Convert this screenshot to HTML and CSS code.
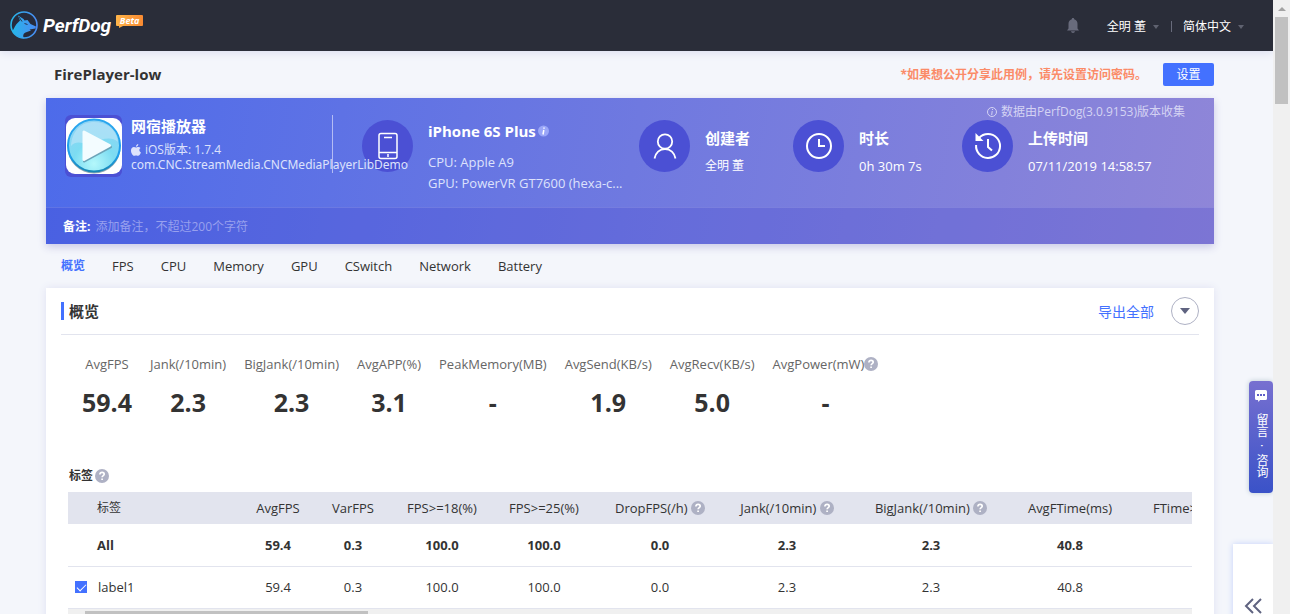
FILE: index.html
```
<!DOCTYPE html>
<html lang="zh-CN">
<head>
<meta charset="utf-8">
<title>PerfDog - FirePlayer-low</title>
<link rel="stylesheet" href="styles.css">
</head>
<body>
<svg class="defs" aria-hidden="true">
  <defs>
    <linearGradient id="logo-blue" x1="0" y1="0" x2="1" y2="0">
      <stop offset="0" stop-color="#27b5e8"/><stop offset="1" stop-color="#4a8cf5"/>
    </linearGradient>
    <radialGradient id="play-blue" cx="0.5" cy="0.85" r="0.8">
      <stop offset="0" stop-color="#b4f8fb"/><stop offset="0.5" stop-color="#7cdcf2"/><stop offset="1" stop-color="#8ed4f4"/>
    </radialGradient>
    <linearGradient id="ring-blue" x1="0" y1="0" x2="0" y2="1">
      <stop offset="0" stop-color="#2aa6ee"/><stop offset="0.7" stop-color="#1d9eea"/><stop offset="1" stop-color="#1787b4"/>
    </linearGradient>
    <symbol id="help" viewBox="0 0 14 14">
      <circle cx="7" cy="7" r="7" fill="#aeb1c4"/>
      <path d="M4.9 5.5C4.9 4 5.8 3.3 7.1 3.3S9.2 4 9.2 5.2C9.2 6.6 7.1 6.6 7.1 8.3M7.1 9.5v1.6" fill="none" stroke="#fff" stroke-width="1.7"/>
    </symbol>
  </defs>
</svg>
<div class="app">
  <header class="topbar">
    <a class="brand" href="#">
      <svg class="brand-mark" viewBox="0 0 28 28">
        <circle cx="14" cy="14" r="13" fill="#262b3c" stroke="url(#logo-blue)" stroke-width="1.600"/>
        <path d="M2.500 20C4.500 17 5 14 8.500 11L10 9.500 8 4.500 13.500 8 14.500 9.500 17.500 9 20.500 13 26 15.500 25.500 17.500 19.500 18.500 21 19.500 15.500 21.500C13 22.500 12.500 25 14 27.500 8 26.500 4.500 23 2.500 20Z" fill="url(#logo-blue)"/>
        <path d="M9 6l3 4.500M14.500 12.500l3 1" stroke="#2b3550" fill="none"/>
      </svg>
      <span class="brand-name">PerfDog</span>
      <span class="beta">Beta</span>
    </a>
    <nav class="user-nav">
      <button class="bell" aria-label="通知">
        <svg viewBox="0 0 12 15"><path d="M6 0c.8 0 1.200.5 1.200 1.200C9.500 1.800 10.500 3.500 10.500 6v4.500L12 12.500H0L1.500 10.500V6C1.500 3.500 2.500 1.800 4.800 1.200 4.800.5 5.200 0 6 0ZM4 13.300h4C7.800 14.500 7 15 6 15s-1.800-.5-2-1.700Z" fill="#686b7c"/></svg>
      </button>
      <button class="menu">全明 董<i class="caret"></i></button>
      <span class="nav-sep"></span>
      <button class="menu">简体中文<i class="caret"></i></button>
    </nav>
  </header>

  <main class="page">
    <div class="title-row">
      <h1>FirePlayer-low</h1>
      <p class="warning">*如果想公开分享此用例，请先设置访问密码。</p>
      <button class="primary">设置</button>
    </div>

    <section class="hero">
      <p class="collected">
        <svg viewBox="0 0 10 10"><circle cx="5" cy="5" r="4.500" fill="none" stroke="currentColor"/><path d="M5.500 2v1M5.200 4L4.700 8" stroke="currentColor" fill="none"/></svg>
        <span>数据由PerfDog(3.0.9153)版本收集</span>
      </p>
      <div class="facts">
        <div class="app-info">
          <div class="app-icon">
            <svg viewBox="0 0 56 56">
              <rect width="56" height="56" rx="9" fill="#fff"/>
              <circle cx="28" cy="29" r="26.500" fill="#8ba6b4"/>
              <circle cx="28" cy="27.500" r="26" fill="url(#play-blue)" stroke="url(#ring-blue)" stroke-width="2"/>
              <path d="M5 28C12 20 20 29 28 25S45 18 52 24C50 10 40 4 28 4S6 12 5 28Z" fill="#bfe6f8" opacity=".6"/>
              <path d="M18 14.500v29L45 29Z" fill="#6ca4b8" stroke="#6ca4b8" stroke-width="2" stroke-linejoin="round"/>
              <path d="M18 14v27.500L43.500 27.500Z" fill="#f3fcff" stroke="#f3fcff" stroke-width="3" stroke-linejoin="round"/>
            </svg>
          </div>
          <div class="app-text">
            <h2>网宿播放器</h2>
            <p class="os"><svg viewBox="0 0 10 12"><path d="M7.300 0C7.300 1.500 6.300 2.700 4.900 2.800 4.900 1.300 6 .2 7.300 0ZM5 3.400C5.700 3.400 6.300 2.900 7.300 2.900 8.200 2.900 9 3.300 9.500 4 7.700 5.100 8 7.600 9.900 8.400 9.300 10 8.300 11.800 7.100 11.800 6.300 11.800 6 11.400 5.100 11.400S3.900 11.800 3.100 11.800C1.700 11.800 0 9.100 0 6.500 0 4.200 1.400 3 2.900 3 3.800 3 4.400 3.400 5 3.400Z" fill="currentColor"/></svg><span>iOS版本: 1.7.4</span></p>
            <p class="bundle">com.CNC.StreamMedia.CNCMediaPlayerLibDemo</p>
          </div>
        </div>
        <div class="fact device">
          <span class="disc"><svg viewBox="0 0 28 28"><g fill="none" stroke="#fff" stroke-width="1.500"><rect x="5" y="1.500" width="18" height="25" rx="2"/><path d="M5 20.500h18M10 5.500h8M14 22v3"/></g></svg></span>
          <div>
            <h2>iPhone 6S Plus<svg class="info" viewBox="0 0 11 12"><rect y=".5" width="11" height="11" rx="5.500" fill="#9aa6f8"/><path d="M6 2.500v1.300M5.800 5L5 9.500" stroke="#fff" stroke-width="1.500"/></svg></h2>
            <p>CPU: Apple A9</p>
            <p>GPU: PowerVR GT7600 (hexa-c...</p>
          </div>
        </div>
        <div class="fact">
          <span class="disc"><svg viewBox="0 0 28 28"><g fill="none" stroke="#fff" stroke-width="1.800"><circle cx="14" cy="9.500" r="7.200"/><path d="M3.500 26.500C4.500 21 8.500 17 14 17S23.500 21 24.500 26.500"/></g></svg></span>
          <div><h2>创建者</h2><p>全明 董</p></div>
        </div>
        <div class="fact">
          <span class="disc"><svg viewBox="0 0 28 28"><g fill="none" stroke="#fff" stroke-width="2"><circle cx="14" cy="14" r="12"/><path d="M14 7v7h6"/></g></svg></span>
          <div><h2>时长</h2><p class="latin">0h 30m 7s</p></div>
        </div>
        <div class="fact">
          <span class="disc"><svg viewBox="0 0 28 28"><g fill="none" stroke="#fff" stroke-width="2"><path d="M2.100 13A12 12 0 1 0 14 2Q8.500 2 5 6"/><path d="M14 7v8l4 3.500"/></g><path d="M1.500 1v8h8Z" fill="#fff"/></svg></span>
          <div><h2>上传时间</h2><p class="latin">07/11/2019 14:58:57</p></div>
        </div>
      </div>
      <div class="note">
        <label for="note">备注:</label>
        <input id="note" type="text" placeholder="添加备注，不超过200个字符">
      </div>
    </section>

    <nav class="tabs">
      <a class="active" href="#">概览</a><a href="#">FPS</a><a href="#">CPU</a><a href="#">Memory</a><a href="#">GPU</a><a href="#">CSwitch</a><a href="#">Network</a><a href="#">Battery</a>
    </nav>

    <section class="panel">
      <div class="panel-head">
        <h2>概览</h2>
        <a class="export" href="#">导出全部</a>
        <button class="round" aria-label="收起"><i></i></button>
      </div>
      <dl class="stats">
        <div><dt>AvgFPS</dt><dd>59.4</dd></div>
        <div><dt>Jank(/10min)</dt><dd>2.3</dd></div>
        <div><dt>BigJank(/10min)</dt><dd>2.3</dd></div>
        <div><dt>AvgAPP(%)</dt><dd>3.1</dd></div>
        <div><dt>PeakMemory(MB)</dt><dd>-</dd></div>
        <div><dt>AvgSend(KB/s)</dt><dd>1.9</dd></div>
        <div><dt>AvgRecv(KB/s)</dt><dd>5.0</dd></div>
        <div><dt>AvgPower(mW)<svg class="help"><use href="#help"/></svg></dt><dd>-</dd></div>
      </dl>
      <h3>标签<svg class="help"><use href="#help"/></svg></h3>
      <div class="table-wrap">
        <table>
          <colgroup><col class="c-label"><col class="c-avg"><col class="c-var"><col class="c-18"><col class="c-25"><col class="c-drop"><col class="c-jank"><col class="c-big"><col class="c-time"><col class="c-last"></colgroup>
          <thead>
            <tr><th class="cjk">标签</th><th>AvgFPS</th><th>VarFPS</th><th>FPS&gt;=18(%)</th><th>FPS&gt;=25(%)</th><th>DropFPS(/h) <svg class="help"><use href="#help"/></svg></th><th>Jank(/10min) <svg class="help"><use href="#help"/></svg></th><th>BigJank(/10min) <svg class="help"><use href="#help"/></svg></th><th>AvgFTime(ms)</th><th>FTime&gt;=</th></tr>
          </thead>
          <tbody>
            <tr class="total"><td>All</td><td>59.4</td><td>0.3</td><td>100.0</td><td>100.0</td><td>0.0</td><td>2.3</td><td>2.3</td><td>40.8</td><td></td></tr>
            <tr><td class="pick"><label><input type="checkbox" checked>label1</label></td><td>59.4</td><td>0.3</td><td>100.0</td><td>100.0</td><td>0.0</td><td>2.3</td><td>2.3</td><td>40.8</td><td></td></tr>
          </tbody>
        </table>
        <div class="hscroll"><span></span></div>
      </div>
    </section>
  </main>

  <a class="feedback" href="#">
    <svg viewBox="0 0 12 12"><path d="M1.500 0h9Q12 0 12 1.500v7q0 1.500-1.500 1.500H5L3.500 12 3 10H1.500Q0 10 0 8.500v-7Q0 0 1.500 0Z" fill="#fff"/><path d="M2 5h2M5 5h2M8 5h2" stroke="#5f5fc8" stroke-width="1.800"/></svg>
    <span class="feedback-text"><span>留言</span><span>·</span><span>咨询</span></span>
  </a>
  <button class="drawer" aria-label="展开">
    <svg viewBox="0 0 18 16"><path d="M9 1L2 8l7 7M17 1l-7 7 7 7" fill="none" stroke="#5f6380" stroke-width="2"/></svg>
  </button>
</div>
<div class="vscroll"><i></i><span></span></div>
</body>
</html>
```
FILE: styles.css
```
* { box-sizing: border-box; }
body, h1, h2, h3, p, dl, dd { margin: 0; }
body {
  display: flex;
  height: 100vh;
  overflow: hidden;
  background: #f4f6fb;
  color: #333;
  font: 13px/18px "Open Sans", "Noto Sans CJK SC", sans-serif;
}
button { margin: 0; padding: 0; border: 0; background: none; color: inherit; font: inherit; }
a { color: inherit; text-decoration: none; }
svg { display: block; flex: none; }
.defs { position: absolute; width: 0; height: 0; }
.app { position: relative; flex: 1; min-width: 0; overflow: hidden; }

.topbar {
  display: flex;
  justify-content: space-between;
  align-items: center;
  height: 51px;
  padding: 0 29px 0 10px;
  background: #2a2d39;
  box-shadow: 0 2px 8px #dcdff0;
  color: #fff;
}
.brand { display: flex; align-items: center; }
.brand-mark { width: 28px; height: 28px; margin-bottom: 2px; }
.brand-name { margin-left: 5px; font: italic 700 19px/24px Roboto, sans-serif; }
.beta {
  position: relative;
  align-self: flex-start;
  width: 27px;
  height: 11px;
  margin: 4px 0 0 5px;
  border-radius: 1px;
  background: linear-gradient(90deg, #ffb54a, #f98a32);
  font: italic 700 9px/11px "Open Sans", sans-serif;
  text-align: center;
}
.beta::after {
  content: "";
  position: absolute;
  top: 100%;
  left: 3px;
  border-top: 2px solid #ffad46;
  border-right: 4px solid transparent;
}
.user-nav { display: flex; align-items: center; padding-top: 2px; font-size: 12px; }
.bell { margin: 0 28px 2px 0; }
.bell svg { width: 12px; height: 15px; }
.menu { display: flex; align-items: center; gap: 7px; }
.caret { border: 3px solid transparent; border-top: 4px solid #5f6270; border-bottom: 0; }
.nav-sep { width: 1px; height: 11px; margin: 0 11px 0 12px; background: #686b7c; }

.page { padding: 0 59px 0 46px; }
.title-row { display: flex; align-items: center; height: 47px; padding-left: 8px; }
h1 { flex: 1; padding-bottom: 2px; font-size: 15px; line-height: 20px; }
.warning { color: #fb8b68; font-size: 12px; font-weight: 700; }
.primary { width: 51px; height: 23px; margin-left: 16px; border-radius: 2px; background: #4371ff; color: #fff; font-size: 12px; }

.hero {
  position: relative;
  background: linear-gradient(100deg, #4d6bea, #6f79e0 50%, #8f86d8);
  box-shadow: 0 3px 8px #c9c9e6;
  color: #fff;
}
.collected {
  position: absolute;
  top: 5px;
  right: 29px;
  display: flex;
  align-items: center;
  gap: 4px;
  color: #d4d3f3;
  font-size: 12px;
}
.collected svg { width: 10px; height: 10px; }
.facts {
  display: grid;
  grid-template-columns: 297fr 277fr 154fr 169fr 252fr;
  height: 109px;
  padding: 17px 0 0 19px;
}
.facts > div { min-width: 0; }
.hero h2 { font-size: 15px; line-height: 22px; white-space: nowrap; }
.app-info { display: flex; gap: 9px; }
.app-icon {
  display: grid;
  place-items: center;
  flex: none;
  width: 57px;
  height: 62px;
  border-radius: 6px;
  background: #4b50d4;
}
.app-icon svg { width: 56px; height: 56px; }
.app-text { flex: 1; min-width: 0; height: 58px; margin-right: 29px; border-right: 1px solid #b4bcf4; }
.app-text p { color: #dde2fc; font-size: 12px; line-height: 15px; white-space: nowrap; }
.app-text .os { display: flex; align-items: center; gap: 4px; padding-top: 5px; }
.os svg { width: 10px; height: 12px; }
.app-text .bundle { position: relative; z-index: 1; font-family: "Noto Sans", sans-serif; }
.fact { display: flex; gap: 15px; padding-top: 5px; }
.disc { display: grid; place-items: center; flex: none; width: 51px; height: 52px; border-radius: 50%; background: #4b50d4; }
.disc svg { width: 28px; height: 28px; }
.fact h2 { padding-top: 7px; }
.fact p { padding-top: 8px; font-size: 12px; white-space: nowrap; }
.fact .latin { font-size: 13px; }
.device h2 { display: flex; align-items: center; gap: 2px; padding: 0 0 2px; }
.info { width: 11px; height: 12px; }
.device p { padding-top: 9px; color: #dde2fc; font-size: 13px; }
.device p + p { padding-top: 3px; }
.note {
  display: flex;
  align-items: center;
  gap: 5px;
  height: 37px;
  padding: 2px 17px 0;
  border-top: 1px solid #ffffff20;
  background: #3c3cc838;
  font-size: 12px;
}
.note label { font-weight: 700; }
.note input { flex: 1; padding: 0; border: 0; outline: 0; background: none; color: #fff; font: inherit; }
.note input::placeholder { color: #98a0ee; }

.tabs { display: flex; align-items: center; gap: 27px; height: 44px; padding-left: 15px; }
.tabs .active { color: #4371ff; font-size: 12px; font-weight: 700; }

.panel { padding: 0 15px; background: #fff; box-shadow: 0 0 8px #dfe1f2; }
.panel-head { display: flex; align-items: center; height: 47px; border-bottom: 1px solid #e2e4ee; }
.panel-head h2 { margin-right: auto; padding-left: 5px; border-left: 3px solid #4371ff; font-size: 15px; line-height: 18px; }
.export { padding-top: 2px; color: #4371ff; font-size: 14px; }
.round { display: grid; place-items: center; width: 28px; height: 28px; margin-left: 17px; border: 1px solid #aeb1c4; border-radius: 50%; }
.round i { border: 5px solid transparent; border-top: 6px solid #5f6380; border-bottom: 0; }
.stats { display: flex; gap: 18px; padding: 20px 21px 0; }
.stats div { text-align: center; }
.stats dt { display: flex; justify-content: center; align-items: center; color: #666; }
.stats dd { padding-top: 12px; font-size: 25px; font-weight: 700; line-height: 34px; }
.help { width: 14px; height: 14px; }
h3 { display: flex; align-items: center; gap: 2px; padding: 48px 0 7px 8px; font-size: 12px; line-height: 18px; }
.table-wrap { margin: 0 7px; overflow: hidden; }
table { width: 1177px; border-collapse: collapse; table-layout: fixed; }
.c-label { width: 171px; }
.c-avg { width: 78px; }
.c-var { width: 72px; }
.c-18 { width: 106px; }
.c-25 { width: 98px; }
.c-drop { width: 134px; }
.c-jank { width: 120px; }
.c-big { width: 168px; }
.c-time { width: 110px; }
.c-last { width: 120px; }
th, td { padding: 0; text-align: center; white-space: nowrap; }
th { height: 32px; background: #e2e4ee; font-weight: 400; }
th .help { display: inline-block; vertical-align: -2px; }
td { height: 42px; border-bottom: 1px solid #e2e4ee; }
th:first-child, td:first-child { padding-left: 29px; text-align: left; }
th:last-child { padding-left: 28px; text-align: left; }
.cjk { font-size: 12px; }
.total { font-weight: 700; }
td.pick { padding-left: 7px; }
.pick label { display: flex; align-items: center; gap: 11px; }
.pick input { appearance: none; display: grid; place-items: center; width: 12px; height: 12px; margin: 0; background: #4371ff; }
.pick input::after { content: ""; width: 8px; height: 4px; margin-bottom: 2px; border: solid #fff; border-width: 0 0 1px 1px; transform: rotate(-45deg); }
.hscroll { height: 17px; padding: 2px 17px; background: #f0f0f0; }
.hscroll span { display: block; width: 26%; height: 13px; background: #c1c1c1; }

.feedback {
  position: absolute;
  top: 381px;
  right: 0;
  display: flex;
  flex-direction: column;
  align-items: center;
  gap: 11px;
  width: 24px;
  height: 112px;
  padding-top: 9px;
  border-radius: 4px;
  background: linear-gradient(#7770d0, #3a52c8);
  box-shadow: 0 0 5px #b8c8d0;
  color: #fff;
  font-size: 12px;
}
.feedback svg { width: 12px; height: 12px; }
.feedback-text { display: flex; gap: 7px; writing-mode: vertical-rl; white-space: nowrap; }
.drawer {
  position: absolute;
  top: 544px;
  right: 0;
  display: flex;
  align-items: center;
  width: 40px;
  height: 124px;
  padding-left: 11px;
  background: #fff;
  box-shadow: 0 0 6px #c3d0fa;
}
.drawer svg { width: 18px; height: 16px; }
.vscroll { display: flex; flex-direction: column; align-items: center; flex: none; width: 17px; background: #f0f0f0; }
.vscroll i { margin: 7px 0 6px; border: 4px solid transparent; border-bottom-color: #a3a3a3; border-top: 0; }
.vscroll span { width: 13px; height: 87px; background: #c1c1c1; }
```
